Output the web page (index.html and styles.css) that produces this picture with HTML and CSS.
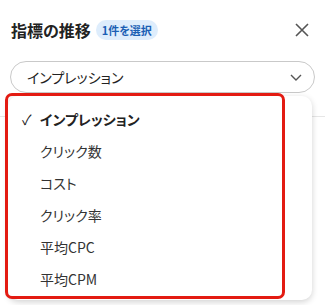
FILE: index.html
```html
<!DOCTYPE html>
<html lang="ja">
<head>
    <meta charset="UTF-8">
    <meta name="viewport" content="width=device-width, initial-scale=1.0">
    <title>指標の推移</title>
    <link rel="stylesheet" href="styles.css">
</head>
<body>
    <div id="panel">
        <div class="header">
            <h2 class="title">指標の推移</h2>
            <span class="badge">1件を選択</span>
            <button class="close" aria-label="閉じる">
                <svg width="14" height="14" viewBox="0 0 14 14">
                    <path d="M1 1 L13 13 M13 1 L1 13" stroke="#555" stroke-width="1.6" fill="none" />
                </svg>
            </button>
        </div>

        <div class="select">
            <span>インプレッション</span>
            <svg class="chevron" width="12" height="7" viewBox="0 0 12 7">
                <path d="M1 1 L6 6 L11 1" stroke="#555" stroke-width="1.4" fill="none" />
            </svg>
        </div>

        <div class="below"></div>

        <!-- ドロップダウン -->
        <ul class="menu">
            <li class="selected"><span class="check">✓</span>インプレッション</li>
            <li>クリック数</li>
            <li>コスト</li>
            <li>クリック率</li>
            <li>平均CPC</li>
            <li>平均CPM</li>
        </ul>
        <div class="highlight"></div>
    </div>
</body>
</html>
```

FILE: styles.css
```css
body {
    margin: 0;
    background: #fff;
    font-family: "Noto Sans CJK JP", "Noto Sans", sans-serif;
    font-feature-settings: "palt";
    color: #222;
}
#panel {
    position: relative;
    width: 325px;
    height: 305px;
    overflow: hidden;
}
.header {
    display: flex;
    align-items: center;
    height: 60px;
    padding: 0 12px 0 11px;
    box-sizing: border-box;
}
.title {
    margin: 0;
    font-size: 16px;
    font-weight: bold;
    color: #222;
}
.badge {
    margin-left: 5px;
    padding: 2px 6px;
    font-size: 11px;
    font-weight: bold;
    color: #1a5fb4;
    background-color: #deedfc;
    border-radius: 10px;
}
.close {
    margin-left: auto;
    margin-right: 4px;
    padding: 0;
    border: none;
    background: none;
    display: flex;
    cursor: pointer;
}
.select {
    display: flex;
    align-items: center;
    height: 32px;
    margin: 1px 10px 0 10px;
    padding: 0 12px 0 16px;
    border: 1px solid #c9c9c9;
    border-radius: 17px;
    font-size: 14px;
    color: #222;
    box-sizing: border-box;
}
.chevron {
    margin-left: auto;
}
.below {
    margin-top: 23px;
    border-top: 1px solid #e6e6e6;
}
.menu {
    position: absolute;
    left: 8px;
    top: 96px;
    width: 304px;
    height: 204px;
    margin: 0;
    padding: 7px 0 0 0;
    box-sizing: border-box;
    list-style: none;
    background: #fff;
    border-radius: 10px;
    box-shadow: 0 2px 6px rgba(0, 0, 0, 0.18);
}
.menu li {
    position: relative;
    height: 32px;
    line-height: 32px;
    padding-left: 32px;
    font-size: 14px;
    color: #333;
}
.menu li.selected {
    font-weight: bold;
    color: #222;
}
.check {
    position: absolute;
    left: 14px;
    font-weight: normal;
}
.highlight {
    position: absolute;
    left: 5px;
    top: 93px;
    width: 280px;
    height: 206px;
    box-sizing: border-box;
    border: 3px solid #e31b12;
    border-radius: 7px;
}
```
